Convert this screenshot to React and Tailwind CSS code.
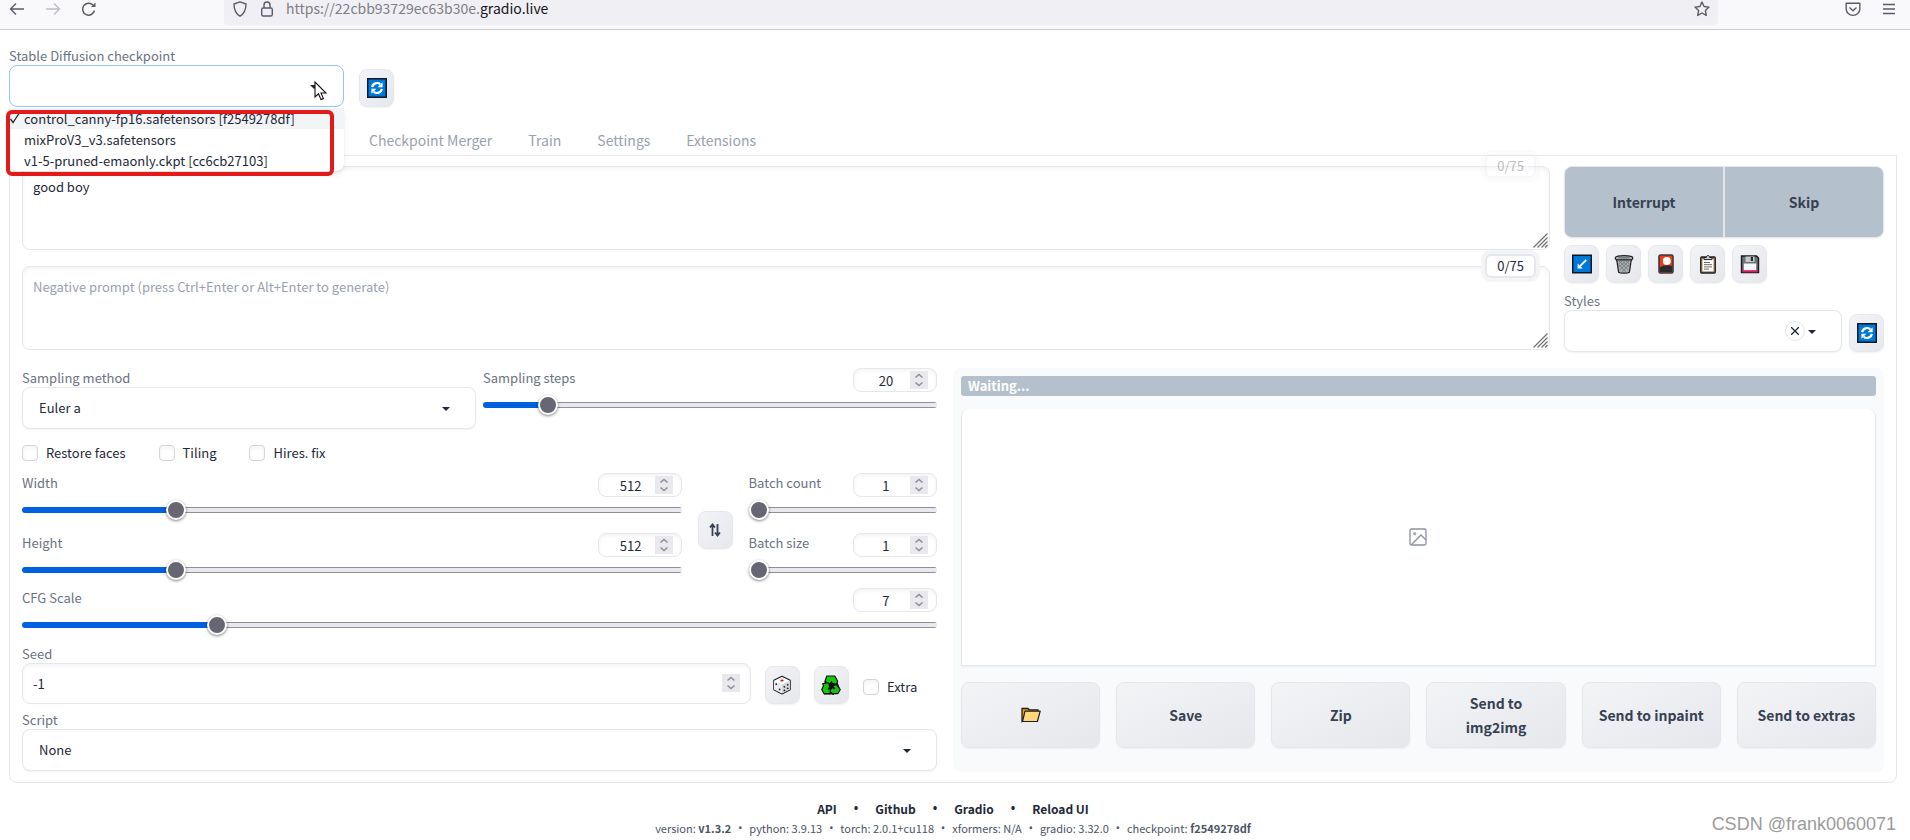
import React from 'react';

const TABS = ['Checkpoint Merger', 'Train', 'Settings', 'Extensions'];

const CHECKPOINTS = [
  'control_canny-fp16.safetensors [f2549278df]',
  'mixProV3_v3.safetensors',
  'v1-5-pruned-emaonly.ckpt [cc6cb27103]',
];

const VERSIONS = [
  { name: 'version', value: 'v1.3.2', bold: true },
  { name: 'python', value: '3.9.13' },
  { name: 'torch', value: '2.0.1+cu118' },
  { name: 'xformers', value: 'N/A' },
  { name: 'gradio', value: '3.32.0' },
  { name: 'checkpoint', value: 'f2549278df', bold: true },
];

/* ---------- icons ---------- */

function RefreshIcon() {
  return (
    <svg width="20" height="20" viewBox="0 0 20 20" aria-hidden="true">
      <rect x="0.75" y="0.75" width="18.5" height="18.5" fill="#0078d7" stroke="#111827" strokeWidth="1.5" />
      <path d="M5.2 9.2A4.9 4.9 0 0 1 13.2 6.2M14.8 10.8A4.9 4.9 0 0 1 6.8 13.8" fill="none" stroke="#fff" strokeWidth="2.2" />
      <path d="M15.6 4.2v5h-5zM4.4 15.8v-5h5z" fill="#fff" />
    </svg>
  );
}

function ArrowIcon() {
  return (
    <svg width="20" height="20" viewBox="0 0 20 20" aria-hidden="true">
      <rect x="0.75" y="1.25" width="18.5" height="17.5" fill="#0078d7" stroke="#111827" strokeWidth="1.5" />
      <path d="M14.2 6 8 12.2" stroke="#fff" strokeWidth="1.8" />
      <path d="M5.6 9.4v5h5z" fill="#fff" />
    </svg>
  );
}

function TrashIcon() {
  return (
    <svg width="20" height="20" viewBox="0 0 20 20" aria-hidden="true">
      <path d="M2.6 5.2 4.6 18.2c1.6 1.3 9.2 1.3 10.8 0L17.4 5.2z" fill="#a9b0b3" stroke="#1f1f1f" strokeWidth="1.2" />
      <path d="M5 7l9.4 9M8.5 7l6.4 6M12 7l4 3.6M4.6 10.5l7.4 7.2M15 7l-9.4 9M11.5 7l-6.4 6M8 7l-4 3.6M15.4 10.5 8 17.7" stroke="#666c6f" strokeWidth="0.7" />
      <path d="M1.2 3.8C1.2 0.9 18.8 0.9 18.8 3.8c0 .8-.4 1.6-1.2 2.1H2.4C1.6 5.4 1.2 4.6 1.2 3.8z" fill="#a8aeb0" stroke="#1f1f1f" strokeWidth="1.2" />
      <ellipse cx="10" cy="3.7" rx="6" ry="1.1" fill="#7c8386" />
    </svg>
  );
}

function CardIcon() {
  return (
    <svg width="20" height="20" viewBox="0 0 20 20" aria-hidden="true">
      <rect x="3" y="1" width="14" height="18" rx="1.5" fill="#f03a17" stroke="#3b3b3b" strokeWidth="1.6" />
      <path d="M4 13.2c3-2 8.5-2.6 12-1.2V18H4z" fill="#2b2b2b" />
      <circle cx="10.8" cy="7" r="4" fill="#fff" />
    </svg>
  );
}

function ClipboardIcon() {
  return (
    <svg width="20" height="20" viewBox="0 0 20 20" aria-hidden="true">
      <rect x="2.7" y="3" width="14.6" height="16" rx="1" fill="#a88360" stroke="#1f1f1f" strokeWidth="1.3" />
      <path d="M4.5 5h11v12.3h-11z" fill="#fff" />
      <path d="M6 5.6V3.5h2.4C8.6.7 11.4.7 11.6 3.5H14v2.1z" fill="#c9ccce" stroke="#1f1f1f" strokeWidth="1" />
      <path d="M6 8.5h6M6 10.7h8M6 12.9h8M6 15.1h5" stroke="#6b6b6b" strokeWidth="1" />
    </svg>
  );
}

function FloppyIcon() {
  return (
    <svg width="20" height="20" viewBox="0 0 20 20" aria-hidden="true">
      <path d="M1.5 2h15l2 2v14.5h-17z" fill="#6d7277" stroke="#1a1a1a" strokeWidth="1.4" />
      <path d="M5.5 2.5h9V8h-9z" fill="#c4c8ca" />
      <path d="M10.8 3h2.2v4h-2.2z" fill="#2b2b2b" />
      <path d="M3.8 9.5h12.4V18H3.8z" fill="#f5f5f5" />
      <path d="M2.5 16.2h15v2.2h-15z" fill="#d81b60" />
    </svg>
  );
}

function DiceIcon() {
  return (
    <svg width="20" height="20" viewBox="0 0 20 20" aria-hidden="true">
      <path d="M10 1.2 18.2 5.2V14.6L10 18.9 1.8 14.6V5.2z" fill="#fff" stroke="#1f1f1f" strokeWidth="1.2" strokeLinejoin="round" />
      <path d="M10 9.4 18 5.4V14.4L10 18.5z" fill="#d3d6da" />
      <path d="M10 9.4 2 5.4V14.4L10 18.5z" fill="#ececef" />
      <ellipse cx="10" cy="5.4" rx="1.7" ry="1" fill="#e3160b" />
      <circle cx="4.3" cy="9.2" r="0.9" fill="#222" />
      <circle cx="7.6" cy="14.4" r="0.9" fill="#222" />
      <circle cx="12.4" cy="11.8" r="0.9" fill="#222" />
      <circle cx="15.7" cy="9.8" r="0.9" fill="#222" />
      <circle cx="12.4" cy="15.4" r="0.9" fill="#222" />
      <circle cx="15.7" cy="13.3" r="0.9" fill="#222" />
    </svg>
  );
}

function RecycleIcon() {
  return (
    <svg width="20" height="20" viewBox="0 0 20 20" aria-hidden="true">
      <path d="M6 1h8l5.2 13-2.2 4.500L10 19.500H3L.8 14.500z" fill="#111" />
      <g fill="#16c60c" stroke="#111" strokeWidth="1.1" strokeLinejoin="round">
        <path d="M5.800 1h8l2.900 5.200-1.300 3.200-5.600-1.500.8-1.500-1.500 2.800-5.200-3z" />
        <path d="M15.200 9.400l4.100 5.200-2.300 4H12.400v1.200L8.400 15.800l4-4.200v2h1.500L11.300 11z" />
        <path d="M1.500 8.800l6-1.200 1.700 6-1.600-.6-.4.900H9.200v4.700H3L.7 14.600l1.900-3.800z" />
      </g>
    </svg>
  );
}

function FolderIcon() {
  return (
    <svg width="20" height="16" viewBox="0 0 20 16" aria-hidden="true">
      <path d="M1 14.5V1.5h6l1.2 1.3h8.8V5z" fill="#e8a317" stroke="#1f1f1f" strokeWidth="1.3" />
      <path d="M1.5 14.5 4 4.2h15.2l-2.8 10.3z" fill="#ffd679" stroke="#1f1f1f" strokeWidth="1.2" strokeLinejoin="round" />
    </svg>
  );
}

function ImageIcon() {
  return (
    <svg width="18" height="18" viewBox="0 0 18 18" fill="none" stroke="#8b929e" strokeWidth="1.3" aria-hidden="true">
      <rect x="1" y="1" width="16" height="16" rx="1.5" />
      <circle cx="5.7" cy="5.7" r="1.7" fill="#a9aeb7" stroke="none" />
      <path d="M2.5 16.5 12 7l5 5" />
    </svg>
  );
}

function Caret({ className }) {
  return (
    <svg width="8" height="4" viewBox="0 0 8 4" className={className} aria-hidden="true">
      <path d="M0 0h8L4 4z" fill="#1f2937" />
    </svg>
  );
}

function Spinner({ className }) {
  return (
    <svg width="18" height="18" viewBox="0 0 18 18" className={className} aria-hidden="true">
      <path d="M0 0h18v18H0z" fill="#e9e9ed" />
      <path d="M5.5 6.5 9 3.5l3.5 3M5.5 11.5 9 14.5l3.5-3" fill="none" stroke="#8f8f9d" strokeWidth="1.6" />
    </svg>
  );
}

function Resizer() {
  return (
    <svg width="15" height="15" viewBox="0 0 15 15" className="pointer-events-none absolute right-[2px] bottom-[2px]" aria-hidden="true">
      <path d="M0.5 14.5l14-14M4.5 14.5l10-10M8.5 14.5l6-6M12 14.5l2.5-2.5" stroke="#6f6f6f" strokeWidth="1.2" />
    </svg>
  );
}

/* ---------- form parts ---------- */

function Label({ htmlFor, children }) {
  return (
    <label htmlFor={htmlFor} className="block text-[13px] leading-[19px] text-gray-500">
      {children}
    </label>
  );
}

function Select({ id, value, active }) {
  return (
    <div className="relative">
      <select
        id={id}
        defaultValue={value}
        className={
          active
            ? 'block h-[42px] w-full appearance-none rounded-lg border border-blue-300 bg-white px-4 text-[13px] outline-none'
            : 'block h-[42px] w-full appearance-none rounded-lg border border-gray-200 bg-white px-4 text-[13px] shadow-xs outline-none'
        }
      >
        <option value={value}>{value}</option>
      </select>
      <Caret className="pointer-events-none absolute top-5 right-[26px]" />
    </div>
  );
}

function ToolButton({ label, children }) {
  return (
    <button
      type="button"
      aria-label={label}
      className="flex h-[38px] w-[35px] shrink-0 items-center justify-center rounded-lg border border-gray-200 bg-linear-to-br from-gray-100 to-gray-200 shadow-xs"
    >
      {children}
    </button>
  );
}

function Slider({ id, label, min, max, value }) {
  const percent = ((value - min) / (max - min)) * 100;

  return (
    <div>
      <div className="flex h-6 items-start justify-between">
        <Label htmlFor={id}>{label}</Label>
        <div className="relative">
          <input
            type="number"
            aria-label={label + ' value'}
            defaultValue={value}
            className="block h-6 w-[84px] appearance-none rounded-lg border border-gray-200 bg-white pr-[26px] pl-2 text-center text-[13px] shadow-[inset_0_2px_4px_rgba(0,0,0,0.05)] outline-none [-moz-appearance:textfield] [&::-webkit-inner-spin-button]:appearance-none"
          />
          <Spinner className="pointer-events-none absolute top-[3px] right-[9px]" />
        </div>
      </div>
      <input
        id={id}
        type="range"
        min={min}
        max={max}
        defaultValue={value}
        style={{
          background: `linear-gradient(to right, #0060df ${percent}%, transparent ${percent}%), linear-gradient(#8f8f9d 1px, #e9e9ed 1px 5px, #8f8f9d 5px)`,
        }}
        className="mt-[10px] block h-[6px] w-full appearance-none rounded-full [&::-webkit-slider-thumb]:size-5 [&::-webkit-slider-thumb]:appearance-none [&::-webkit-slider-thumb]:rounded-full [&::-webkit-slider-thumb]:border-2 [&::-webkit-slider-thumb]:border-white [&::-webkit-slider-thumb]:bg-[#676774] [&::-webkit-slider-thumb]:shadow-[0_1px_3px_rgba(0,0,0,0.5)]"
      />
    </div>
  );
}

function Checkbox({ id, label }) {
  return (
    <div className="flex items-center gap-2">
      <input
        id={id}
        type="checkbox"
        className="size-4 appearance-none rounded border border-gray-300 bg-white shadow-[inset_0_2px_4px_rgba(0,0,0,0.05)]"
      />
      <label htmlFor={id} className="text-[13px] leading-4">{label}</label>
    </div>
  );
}

function Prompt({ id, label, value, placeholder, faded }) {
  return (
    <div className="relative">
      <textarea
        id={id}
        aria-label={label}
        defaultValue={value}
        placeholder={placeholder}
        className="block h-[84px] w-full resize-none rounded-lg border border-gray-200 bg-white px-[10px] py-[10px] text-[13px] leading-[19px] shadow-[inset_0_2px_4px_rgba(0,0,0,0.05)] outline-none placeholder:text-gray-400"
      />
      <Resizer />
      <span
        className={
          faded
            ? 'absolute -top-3 right-[14px] rounded-md border-2 border-gray-200 bg-white px-[10px] text-[13px] leading-5 opacity-30 ring-4 ring-gray-100'
            : 'absolute -top-3 right-[14px] rounded-md border-2 border-gray-200 bg-white px-[10px] text-[13px] leading-5 ring-4 ring-gray-100'
        }
      >
        0/75
      </span>
    </div>
  );
}

/* ---------- page sections ---------- */

function BrowserBar() {
  return (
    <header className="flex h-[30px] items-start border-b border-[#cccccc] bg-[#f9f9fb]">
      <div className="flex w-56 shrink-0 gap-5 pt-px pl-[9px]">
        <button type="button" aria-label="Back">
          <svg width="16" height="16" viewBox="0 0 16 16" fill="none" stroke="#5b5b66" strokeWidth="1.4">
            <path d="M15 8H1.5M7 2.5 1.5 8 7 13.5" />
          </svg>
        </button>
        <button type="button" aria-label="Forward">
          <svg width="16" height="16" viewBox="0 0 16 16" fill="none" stroke="#bcbcc3" strokeWidth="1.4">
            <path d="M1 8h13.5M9 2.5 14.5 8 9 13.5" />
          </svg>
        </button>
        <button type="button" aria-label="Reload">
          <svg width="16" height="16" viewBox="0 0 16 16" fill="none" stroke="#5b5b66" strokeWidth="1.5">
            <path d="M13.5 9.5A6 6 0 1 1 12 4" />
            <path d="M14.5 1.5V6H10z" fill="#5b5b66" stroke="none" />
          </svg>
        </button>
      </div>
      <div className="flex h-[25px] flex-1 gap-[11px] rounded-b bg-[#f0f0f4] pt-px pl-2">
        <svg width="16" height="16" viewBox="0 0 16 16" fill="none" stroke="#5b5b66" strokeWidth="1.4" aria-hidden="true">
          <path d="M8 .8 14 3c0 6-1.5 9.5-6 12.2C3.5 12.5 2 9 2 3z" strokeLinejoin="round" />
        </svg>
        <svg width="16" height="16" viewBox="0 0 16 16" fill="none" stroke="#5b5b66" strokeWidth="1.4" aria-hidden="true">
          <rect x="2.7" y="7" width="10.6" height="8" rx="1.5" />
          <path d="M5 7V4a3 3 0 0 1 6 0v3" />
        </svg>
        <p className="flex-1 text-[14px] leading-[15px] text-[#7d7d86]">
          https://22cbb93729ec63b30e.<span className="text-[#15141a]">gradio.live</span>
        </p>
        <button type="button" aria-label="Bookmark this page" className="mr-2 h-4">
          <svg width="16" height="16" viewBox="0 0 16 16" fill="none" stroke="#5b5b66" strokeWidth="1.4" strokeLinejoin="round">
            <path d="m8 1 2.1 4.5 4.9.6-3.6 3.4.9 4.9L8 12l-4.3 2.4.9-4.9L1 6.1l4.9-.6z" />
          </svg>
        </button>
      </div>
      <div className="flex w-48 shrink-0 justify-end gap-5 pt-px pr-[13px]">
        <button type="button" aria-label="Save to Pocket">
          <svg width="16" height="16" viewBox="0 0 16 16" fill="none" stroke="#5b5b66" strokeWidth="1.4" strokeLinejoin="round">
            <path d="M1.2 2.2h13.6V8a6.8 6.4 0 0 1-13.6 0z" />
            <path d="M4.5 6.5 8 9.8l3.5-3.3" />
          </svg>
        </button>
        <button type="button" aria-label="Open menu">
          <svg width="16" height="16" viewBox="0 0 16 16" stroke="#5b5b66" strokeWidth="1.4">
            <path d="M2 3.5h12M2 8h12M2 12.5h12" />
          </svg>
        </button>
      </div>
    </header>
  );
}

function CheckpointPicker() {
  return (
    <div className="flex items-end gap-[15px]">
      <div className="relative w-[335px]">
        <Label htmlFor="checkpoint">Stable Diffusion checkpoint</Label>
        <Select id="checkpoint" value="" active />

        {/* open list */}
        <ul className="absolute top-full left-0 z-10 w-full rounded-b-lg bg-white pt-px text-[13px] leading-[21px] shadow-md">
          {CHECKPOINTS.map((name, index) => (
            <li key={name} className={index === 0 ? 'flex bg-gray-100' : 'flex'}>
              <span className="w-[15px] shrink-0">
                {index === 0 && (
                  <svg width="12" height="20" viewBox="0 0 12 20" fill="none" stroke="#1f2937" strokeWidth="1.3" aria-hidden="true">
                    <path d="M1.5 11 4 14.5 10 5.5" />
                  </svg>
                )}
              </span>
              {name}
            </li>
          ))}
        </ul>

        {/* marker frame and mouse pointer over the list */}
        <div className="pointer-events-none absolute top-16 -left-[3px] z-20 h-[66px] w-[328px] rounded-md border-4 border-[#e21a1a]" />
        <svg width="13" height="20" viewBox="0 0 13 20" className="pointer-events-none absolute top-[35px] left-[305px] z-20" aria-hidden="true">
          <path d="M1 1v15l3.5-3.2L7 18.6l2.4-1L7 12h5z" fill="#fff" stroke="#111" strokeWidth="1.1" />
        </svg>
      </div>
      <ToolButton label="Refresh checkpoints"><RefreshIcon /></ToolButton>
    </div>
  );
}

function Tabs() {
  return (
    <nav className="mt-[19px] flex h-[29px] items-start gap-9 pl-[360px]">
      {TABS.map((tab) => (
        <button key={tab} type="button" className="text-[14px] leading-[29px] text-gray-400">{tab}</button>
      ))}
    </nav>
  );
}

function Actions() {
  return (
    <div className="w-80 shrink-0">
      <div className="flex h-[72px] gap-[2px] overflow-hidden rounded-lg border border-gray-200 bg-gray-200 text-[14px] font-bold text-gray-700 shadow-xs">
        <button type="button" className="flex-1 bg-[#b4c0cc]">Interrupt</button>
        <button type="button" className="flex-1 bg-[#b4c0cc]">Skip</button>
      </div>
      <div className="mt-[7px] flex h-[39px] gap-[7px]">
        <ToolButton label="Read generation parameters"><ArrowIcon /></ToolButton>
        <ToolButton label="Clear prompt"><TrashIcon /></ToolButton>
        <ToolButton label="Show extra networks"><CardIcon /></ToolButton>
        <ToolButton label="Apply styles"><ClipboardIcon /></ToolButton>
        <ToolButton label="Save style"><FloppyIcon /></ToolButton>
      </div>
      <div className="mt-[7px] flex items-end gap-[7px]">
        <div className="relative flex-1">
          <Label htmlFor="styles">Styles</Label>
          <Select id="styles" value="" />
          <button
            type="button"
            aria-label="Clear styles"
            className="absolute right-[37px] bottom-[11px] flex size-5 items-center justify-center rounded-full border border-gray-200 bg-white"
          >
            <svg width="8" height="8" viewBox="0 0 8 8" stroke="#1f2937" strokeWidth="1.3">
              <path d="M0 0l8 8M8 0 0 8" />
            </svg>
          </button>
        </div>
        <ToolButton label="Refresh styles"><RefreshIcon /></ToolButton>
      </div>
    </div>
  );
}

function Settings() {
  return (
    <div>
      <div className="grid grid-cols-2 gap-[7px]">
        <div>
          <Label htmlFor="sampler">Sampling method</Label>
          <Select id="sampler" value="Euler a" />
        </div>
        <Slider id="steps" label="Sampling steps" min={1} max={150} value={20} />
      </div>

      <div className="mt-4 flex gap-[33px]">
        <Checkbox id="restore-faces" label="Restore faces" />
        <Checkbox id="tiling" label="Tiling" />
        <Checkbox id="hires-fix" label="Hires. fix" />
      </div>

      <div className="mt-3 flex gap-4">
        <div className="flex flex-[7] flex-col gap-5">
          <Slider id="width" label="Width" min={64} max={2048} value={512} />
          <Slider id="height" label="Height" min={64} max={2048} value={512} />
        </div>
        <div className="self-end pb-6">
          <ToolButton label="Switch width and height">
            <svg width="12" height="14" viewBox="0 0 12 14" fill="none" stroke="#374151" strokeWidth="1.8" aria-hidden="true">
              <path d="M3.5 13V2M1 4.5 3.5 1.5 6 4.5M8.5 1v11M6 9.5l2.5 3 2.5-3" />
            </svg>
          </ToolButton>
        </div>
        <div className="flex flex-[2] flex-col gap-5">
          <Slider id="batch-count" label="Batch count" min={1} max={100} value={1} />
          <Slider id="batch-size" label="Batch size" min={1} max={8} value={1} />
        </div>
      </div>

      <div className="mt-[15px]">
        <Slider id="cfg" label="CFG Scale" min={1} max={30} value={7} />
      </div>

      <div className="mt-4 flex items-end gap-[14px]">
        <div className="flex-1">
          <Label htmlFor="seed">Seed</Label>
          <div className="relative">
            <input
              id="seed"
              type="number"
              defaultValue={-1}
              className="block h-[41px] w-full appearance-none rounded-lg border border-gray-200 bg-white px-[10px] text-[13px] shadow-[inset_0_2px_4px_rgba(0,0,0,0.05)] outline-none [-moz-appearance:textfield] [&::-webkit-inner-spin-button]:appearance-none"
            />
            <Spinner className="pointer-events-none absolute top-[11px] right-[11px]" />
          </div>
        </div>
        <ToolButton label="Random seed"><DiceIcon /></ToolButton>
        <ToolButton label="Reuse seed"><RecycleIcon /></ToolButton>
        <div className="w-[74px] pb-[9px]">
          <Checkbox id="extra" label="Extra" />
        </div>
      </div>

      <div className="mt-[6px]">
        <Label htmlFor="script">Script</Label>
        <Select id="script" value="None" />
      </div>
    </div>
  );
}

function Results() {
  const actions = ['Save', 'Zip', 'Send to img2img', 'Send to inpaint', 'Send to extras'];

  return (
    <div className="rounded-lg bg-gray-50 px-2 pt-2 pb-6">
      <div className="h-5 rounded-[3px] bg-[#b4c0cc] px-[7px] text-[13px] leading-5 font-bold text-white">Waiting...</div>
      <div className="mt-[13px] flex h-[257px] items-center justify-center rounded-t-lg border border-t-0 border-gray-200 bg-white shadow-xs">
        <ImageIcon />
      </div>
      <div className="mt-4 grid grid-cols-6 gap-4">
        <button
          type="button"
          aria-label="Open output folder"
          className="flex h-[66px] items-center justify-center rounded-lg border border-gray-200 bg-linear-to-br from-gray-100 to-gray-200 shadow-xs"
        >
          <FolderIcon />
        </button>
        {actions.map((name) => (
          <button
            key={name}
            type="button"
            className="h-[66px] rounded-lg border border-gray-200 bg-linear-to-br from-gray-100 to-gray-200 px-[14px] text-[14px] leading-6 font-bold text-gray-700 shadow-xs"
          >
            {name}
          </button>
        ))}
      </div>
    </div>
  );
}

function Dot() {
  return <span className="font-['Noto_Sans',sans-serif]">•</span>;
}

function Footer() {
  return (
    <footer className="mt-[15px] text-center">
      <div className="flex justify-center gap-[17px] text-[12px] leading-[22px] font-bold">
        <a href="#api">API</a>
        <Dot />
        <a href="#github">Github</a>
        <Dot />
        <a href="#gradio">Gradio</a>
        <Dot />
        <a href="#reload">Reload UI</a>
      </div>
      <div className="flex justify-center gap-[7px] text-[11px] leading-4 text-gray-600">
        {VERSIONS.map((item, index) => (
          <React.Fragment key={item.name}>
            {index > 0 && <Dot />}
            <span>
              {item.name}: <span className={item.bold ? 'font-bold' : ''}>{item.value}</span>
            </span>
          </React.Fragment>
        ))}
      </div>
    </footer>
  );
}

export default function App() {
  return (
    <div className="relative min-h-screen bg-white font-['Noto_Sans_CJK_SC',sans-serif] text-gray-800">
      <BrowserBar />
      <main className="pt-4 pr-[13px] pl-[9px]">
        <CheckpointPicker />
        <Tabs />
        <div className="rounded-b-lg border border-gray-200 px-3 py-[10px]">
          <div className="flex gap-[14px]">
            <div className="flex flex-1 flex-col gap-4">
              <Prompt id="prompt" label="Prompt" value="good boy" faded />
              <Prompt
                id="negative-prompt"
                label="Negative prompt"
                placeholder="Negative prompt (press Ctrl+Enter or Alt+Enter to generate)"
              />
            </div>
            <Actions />
          </div>
          <div className="mt-4 grid grid-cols-[minmax(0,57fr)_minmax(0,58fr)] gap-4">
            <Settings />
            <Results />
          </div>
        </div>
        <Footer />
      </main>
      <p className="absolute right-[14px] bottom-1 font-['Liberation_Sans',sans-serif] text-[18px] leading-6 text-[#9b9b9b]">
        CSDN @frank0060071
      </p>
    </div>
  );
}
